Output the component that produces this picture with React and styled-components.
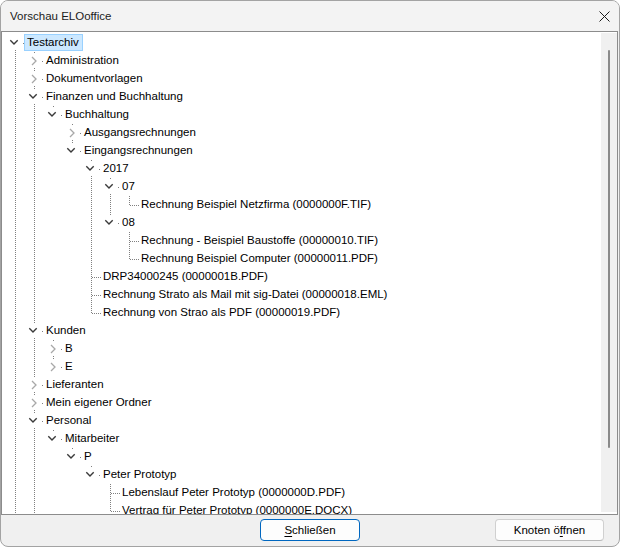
import React from 'react';
import styled, { createGlobalStyle } from 'styled-components';

const FONT = `"Liberation Sans", Arial, sans-serif`;

const GlobalStyle = createGlobalStyle`
  html, body { margin: 0; padding: 0; background: #ffffff; }
  #root { width: 620px; height: 547px; }
`;

const Window = styled.div`
  box-sizing: border-box;
  width: 620px;
  height: 547px;
  border: 1px solid #a3a3a3;
  border-radius: 8px;
  overflow: hidden;
  display: flex;
  flex-direction: column;
  background: #f0f0f0;
  font-family: ${FONT};
  font-size: 11.5px;
  color: #000;
`;

const TitleBar = styled.div`
  flex: none;
  height: 30px;
  display: flex;
  align-items: center;
  justify-content: space-between;
  padding-left: 9px;
  background: #f3f3f3;
`;

const Title = styled.span`
  font-size: 11.5px;
  color: #1b1b1b;
`;

const CloseButton = styled.div`
  width: 30px;
  height: 30px;
  display: flex;
  align-items: center;
  justify-content: center;
`;

const TreePanel = styled.div`
  flex: none;
  box-sizing: border-box;
  height: 484px;
  margin-right: 1px;
  border: 1px solid #8c8c8c;
  background: #ffffff;
  display: flex;
`;

const TreeArea = styled.div`
  flex: 1;
  overflow: hidden;
  padding: 2px 0 0 3px;
`;

const ScrollTrack = styled.div`
  flex: none;
  box-sizing: border-box;
  width: 16px;
  margin: 1px 0 2px;
  padding: 17px 0 0 7px;
  background: #f0f0f0;
`;

const ScrollThumb = styled.div`
  width: 2px;
  height: 398px;
  border-radius: 1px;
  background: #8a8a8a;
`;

const Row = styled.div`
  display: flex;
  align-items: flex-start;
  height: 18px;
  white-space: nowrap;
`;

const Guide = styled.svg`
  flex: none;
  display: block;
  width: 19px;
  height: 18px;
  overflow: visible;
`;

const Label = styled.span`
  box-sizing: border-box;
  height: 17px;
  line-height: 15px;
  padding: 0 3px 0 2px;
  border: 1px solid ${(p) => (p.$selected ? '#99d1ff' : 'transparent')};
  background: ${(p) => (p.$selected ? '#cce8ff' : 'transparent')};
`;

const Footer = styled.div`
  flex: 1;
  display: grid;
  grid-template-columns: 1fr auto 1fr;
  align-items: start;
  padding-top: 4px;
`;

const Button = styled.button`
  box-sizing: border-box;
  width: ${(p) => p.$w}px;
  height: 22px;
  padding: 0;
  font-family: ${FONT};
  font-size: 11.5px;
  color: #000;
  background: #fdfdfd;
  border: 1px solid ${(p) => (p.$primary ? '#0067c0' : '#d0d0d0')};
  border-bottom-color: ${(p) => (p.$primary ? '#0067c0' : '#b9b9b9')};
  border-radius: 4px;
  grid-column: ${(p) => p.$col};
  justify-self: ${(p) => (p.$col === 3 ? 'end' : 'center')};
  margin-right: ${(p) => (p.$col === 3 ? '15px' : '0')};
`;

const Key = styled.u`
  text-decoration: underline;
  text-underline-offset: 2px;
`;

const DOT = '#808080';

const Dotted = (props) => (
  <line stroke={DOT} strokeWidth="1" strokeDasharray="1 1" shapeRendering="crispEdges" {...props} />
);

function AncestorCell({ line }) {
  return <Guide viewBox="0 0 19 18">{line && <Dotted x1="10.5" y1="0" x2="10.5" y2="18" />}</Guide>;
}

function OwnCell({ kind, hasTop, hasNext }) {
  if (kind === 'leaf') {
    return (
      <Guide viewBox="0 0 19 18">
        <Dotted x1="10.5" y1="0" x2="10.5" y2={hasNext ? 18 : 10} />
        <Dotted x1="11" y1="9.5" x2="20" y2="9.5" />
      </Guide>
    );
  }
  return (
    <Guide viewBox="0 0 19 18">
      {hasTop && <Dotted x1="10.5" y1="0" x2="10.5" y2="1" />}
      {hasNext && <Dotted x1="10.5" y1="16" x2="10.5" y2="18" />}
      <Dotted x1="18" y1="9.5" x2="19" y2="9.5" />
      {kind === 'open' ? (
        <path d="M5.3 6.3 L9 10 L12.7 6.3" fill="none" stroke="#3a3a3a" strokeWidth="1.4" />
      ) : (
        <path d="M8 5 L12 9 L8 13" fill="none" stroke="#a8a8a8" strokeWidth="1.3" />
      )}
    </Guide>
  );
}

const TREE = [
  {
    label: 'Testarchiv',
    selected: true,
    more: true,
    children: [
      { label: 'Administration', closed: true },
      { label: 'Dokumentvorlagen', closed: true },
      {
        label: 'Finanzen und Buchhaltung',
        children: [
          {
            label: 'Buchhaltung',
            children: [
              { label: 'Ausgangsrechnungen', closed: true },
              {
                label: 'Eingangsrechnungen',
                children: [
                  {
                    label: '2017',
                    children: [
                      { label: '07', children: [{ label: 'Rechnung Beispiel Netzfirma (0000000F.TIF)' }] },
                      {
                        label: '08',
                        children: [
                          { label: 'Rechnung - Beispiel Baustoffe (00000010.TIF)' },
                          { label: 'Rechnung Beispiel Computer (00000011.PDF)' },
                        ],
                      },
                    ],
                  },
                  { label: 'DRP34000245 (0000001B.PDF)' },
                  { label: 'Rechnung Strato als Mail mit sig-Datei (00000018.EML)' },
                  { label: 'Rechnung von Strao als PDF (00000019.PDF)' },
                ],
              },
            ],
          },
        ],
      },
      {
        label: 'Kunden',
        children: [
          { label: 'B', closed: true },
          { label: 'E', closed: true },
        ],
      },
      { label: 'Lieferanten', closed: true },
      { label: 'Mein eigener Ordner', closed: true },
      {
        label: 'Personal',
        more: true,
        children: [
          {
            label: 'Mitarbeiter',
            children: [
              {
                label: 'P',
                children: [
                  {
                    label: 'Peter Prototyp',
                    children: [
                      { label: 'Lebenslauf Peter Prototyp (0000000D.PDF)' },
                      { label: 'Vertrag für Peter Prototyp (0000000E.DOCX)' },
                    ],
                  },
                ],
              },
            ],
          },
        ],
      },
    ],
  },
];

function flatten(nodes, level = 0, guides = [], out = []) {
  nodes.forEach((node, i) => {
    const hasNext = i < nodes.length - 1 || !!node.more;
    const kind = node.children ? 'open' : node.closed ? 'closed' : 'leaf';
    out.push({
      label: node.label,
      selected: !!node.selected,
      kind,
      hasNext,
      hasTop: level > 0 || i > 0,
      guides,
    });
    if (node.children) flatten(node.children, level + 1, [...guides, hasNext], out);
  });
  return out;
}

const ROWS = flatten(TREE);

export default function App() {
  return (
    <>
      <GlobalStyle />
      <Window>
        <TitleBar>
          <Title>Vorschau ELOoffice</Title>
          <CloseButton>
            <svg width="11" height="11" viewBox="0 0 11 11">
              <path d="M0.5 0.5 L10.5 10.5 M10.5 0.5 L0.5 10.5" stroke="#1b1b1b" strokeWidth="1" fill="none" />
            </svg>
          </CloseButton>
        </TitleBar>
        <TreePanel>
          <TreeArea>
            {ROWS.map((r, idx) => (
              <Row key={idx}>
                {r.guides.map((g, k) => (
                  <AncestorCell key={k} line={g} />
                ))}
                <OwnCell kind={r.kind} hasTop={r.hasTop} hasNext={r.hasNext} />
                <Label $selected={r.selected}>{r.label}</Label>
              </Row>
            ))}
          </TreeArea>
          <ScrollTrack>
            <ScrollThumb />
          </ScrollTrack>
        </TreePanel>
        <Footer>
          <Button $primary $w={100} $col={2}>
            <Key>S</Key>chließen
          </Button>
          <Button $w={109} $col={3}>
            Knoten ö<Key>f</Key>fnen
          </Button>
        </Footer>
      </Window>
    </>
  );
}
